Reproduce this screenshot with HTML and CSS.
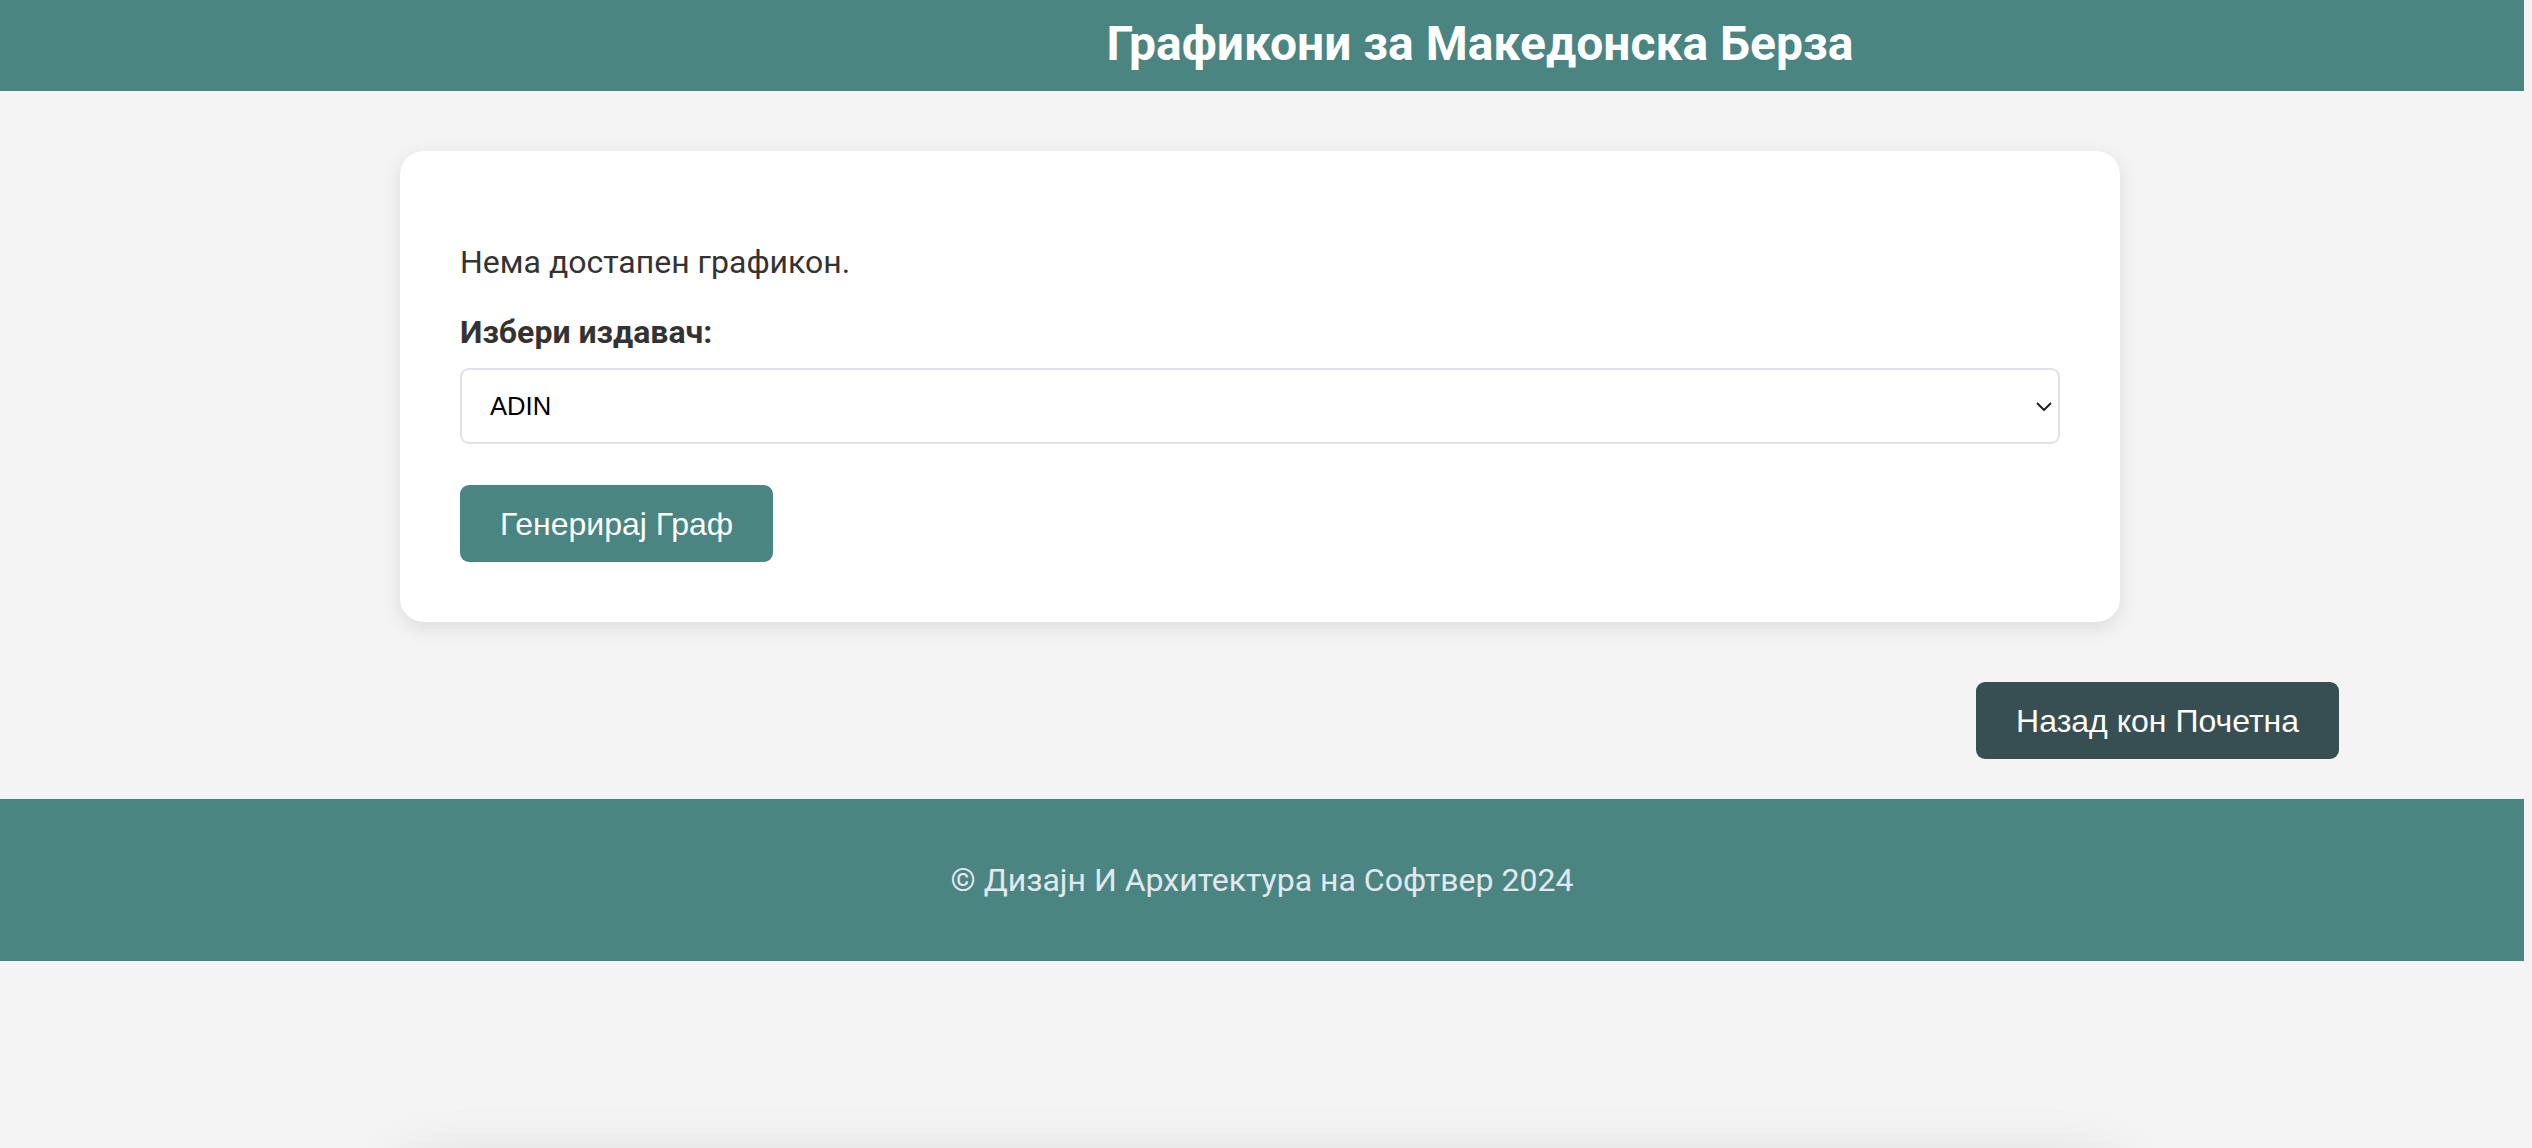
FILE: index.html
```html
<!DOCTYPE html>
<html lang="mk">
<head>
<meta charset="utf-8">
<title>Графикони за Македонска Берза</title>
<link rel="stylesheet" href="styles.css">
</head>
<body>
<header class="top">
  <h1 class="title">Графикони за Македонска Берза</h1>
</header>
<main class="main">
  <section class="card">
    <p class="empty">Нема достапен графикон.</p>
    <form class="form">
      <label class="label" for="issuer">Избери издавач:</label>
      <div class="select-wrap">
        <select id="issuer" class="select">
          <option>ADIN</option>
        </select>
        <svg class="chevron" width="16" height="9" viewBox="0 0 16 9" aria-hidden="true"><path d="M1 1 L8 8 L15 1" fill="none" stroke="#222" stroke-width="2"/></svg>
      </div>
      <button type="button" class="btn btn-primary">Генерирај Граф</button>
    </form>
  </section>
  <div class="actions">
    <a class="btn btn-dark" href="#">Назад кон Почетна</a>
  </div>
</main>
<footer class="footer">
  <p class="copy">© Дизајн И Архитектура на Софтвер 2024</p>
</footer>
<div class="ghost"></div>
</body>
</html>
```

FILE: styles.css
```css
* { box-sizing: border-box; }

html, body {
  margin: 0;
  padding: 0;
}

body {
  background: #f4f4f4;
  font-family: Roboto, "Noto Sans", sans-serif;
  color: #333;
}

.top {
  background: #4a8581;
  margin-right: 8px;
  padding: 14px 0 17px 436px;
  text-align: center;
}

.title {
  margin: 0;
  font-size: 48px;
  line-height: 60px;
  font-weight: 700;
  color: #fff;
}

.main {
  display: flex;
  flex-direction: column;
}

.card {
  width: 1720px;
  margin: 60px 0 0 400px;
  padding: 60px;
  background: #fff;
  border-radius: 24px;
  box-shadow: 0 6px 20px rgba(0, 0, 0, 0.1);
}

.empty {
  margin: 32px 0;
  font-size: 32px;
  line-height: 38px;
}

.form {
  display: flex;
  flex-direction: column;
  align-items: flex-start;
}

.label {
  display: block;
  font-size: 32px;
  line-height: 38px;
  font-weight: 700;
  margin-bottom: 17px;
}

.select-wrap {
  position: relative;
  width: 100%;
}

.select {
  display: block;
  width: 100%;
  height: 76px;
  padding: 0 28px;
  border: 2px solid #dfe2e6;
  border-radius: 9px;
  background: #fff;
  font-family: "Liberation Sans", Arial, sans-serif;
  font-size: 25.6px;
  color: #000;
  appearance: none;
  -webkit-appearance: none;
}

.chevron {
  position: absolute;
  right: 8px;
  top: 34px;
  pointer-events: none;
}

.btn {
  display: inline-block;
  border: 0;
  border-radius: 9px;
  padding: 20.5px 40px;
  font-family: "Liberation Sans", Arial, sans-serif;
  font-size: 32px;
  line-height: 36px;
  color: #fff;
  text-decoration: none;
  cursor: pointer;
}

.btn-primary {
  margin-top: 41px;
  background: #4a8581;
}

.actions {
  display: flex;
  justify-content: flex-end;
  margin-top: 60px;
  padding-right: 193px;
}

.btn-dark {
  background: #374f52;
}

.footer {
  margin: 40px 8px 0 0;
  background: #4a8581;
  padding: 62px 0;
  text-align: center;
}

.copy {
  margin: 0;
  font-size: 32px;
  line-height: 38px;
  color: #e2e8f0;
}

.ghost {
  width: 1720px;
  height: 300px;
  margin: 200px 0 0 400px;
  background: #f4f4f4;
  border-radius: 24px;
  box-shadow: 0 0 60px rgba(0, 0, 0, 0.12);
}
```
